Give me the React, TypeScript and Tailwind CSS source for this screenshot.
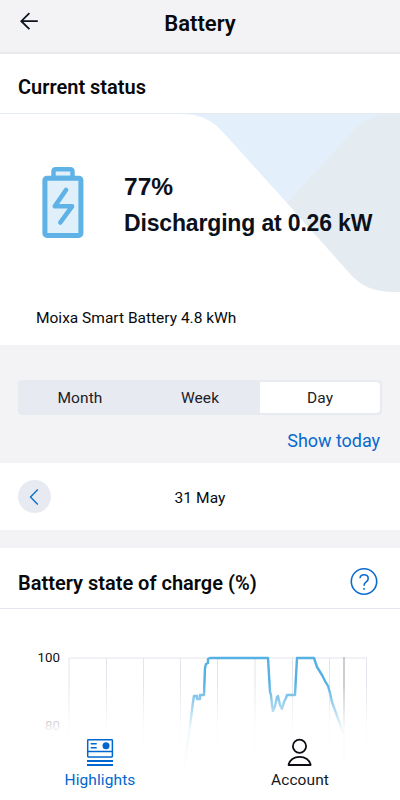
import React from 'react';
import { clsx } from 'clsx';

const BackIcon = () => (
  <svg width="20" height="20" viewBox="0 0 20 20" fill="none" stroke="#0d1420" strokeWidth="1.8">
    <path d="M18.8 10.2H2.3M10.4 2.2L2.3 10.2l8.1 8" />
  </svg>
);

const BatteryIcon = () => (
  <svg width="42" height="72" viewBox="0 0 42 72" fill="#e0f0fb" stroke="#5eb2e6" strokeWidth="5" strokeLinejoin="round">
    <path d="M11.5 11V4.5q0-2.3 2.3-2.3h14.4q2.3 0 2.3 2.3V11z" strokeWidth="4.4" />
    <rect x="2.9" y="11.2" width="36" height="57.2" rx="2" />
    <path d="M24 23L12.8 39.3h17.3L18.3 55.5" fill="none" strokeLinecap="round" strokeWidth="4.6" />
  </svg>
);

const HighlightsIcon = () => (
  <svg width="28" height="30" viewBox="0 0 28 30" fill="none" stroke="#0067cf" strokeWidth="1.5">
    <rect x="1.7" y="2.7" width="24.7" height="17.2" rx=".7" />
    <path d="M1.7 14.4h24.7M4.7 6.7h6M4.7 10.7h6" />
    <path d="M1 24h26M1 28h26" strokeWidth="1.8" />
    <circle cx="20" cy="8.7" r="3.5" fill="#0067cf" stroke="none" />
  </svg>
);

const AccountIcon = () => (
  <svg width="28" height="30" viewBox="0 0 28 30" fill="none" stroke="#0d0d14" strokeWidth="1.8" strokeLinejoin="round">
    <circle cx="13.5" cy="9.3" r="6.6" />
    <path d="M2.6 28c.8-5.2 5.5-8.2 11-8.2s10.2 3 11 8.2z" />
  </svg>
);

const HelpIcon = () => (
  <svg width="28" height="28" viewBox="0 0 28 28" fill="none" stroke="#0b6bd0" strokeWidth="1.6">
    <circle cx="14" cy="13.5" r="12.7" />
    <path d="M10 10.3c.2-2.2 1.8-3.6 4.1-3.6 2.4 0 4.1 1.5 4.1 3.7 0 1.7-.9 2.6-2.1 3.5-1.4 1-2.1 1.8-2.1 3.8" />
    <path d="M14 20v1.7" />
  </svg>
);

// Step values of the charge curve, in plot pixels
const chargeLine =
  '184,768 188,741 191,718 193,702 194,696 197,696 197,699 200,699 200,695 204,695 205,668 206,664 208,663 208,659 210,658 268,658 269,675 270,692 271,695 272,705 273,711 275,706 277,697 278,696 280,705 282,709 284,702 286,698 287,695 295,695 296,676 297,658 314,658 317,667 322,675 325,681 328,686 330,693 332,702 336,713 340,724 343,733';

const gridX = [69, 106.5, 143.5, 180.5, 217.5, 255, 292.5, 329.5, 366.5];

const ChargeChart = () => (
  <svg className="block" width="400" height="191" viewBox="0 609 400 191" fill="none">
    <g stroke="#e3e4ec">
      {gridX.map((x) => (
        <path key={x} d={`M${x} 658V800`} />
      ))}
      <path d="M69 658H367" />
    </g>
    <path d="M344 657V800" stroke="#b0b2b6" strokeWidth="1.3" />
    <polyline points={chargeLine} stroke="#55b0e3" strokeWidth="2.4" strokeLinejoin="round" />
    <g fill="#111" fontFamily="Roboto, sans-serif" fontSize="13.3" textAnchor="end">
      <text x="60" y="662">100</text>
      <text x="60" y="730">80</text>
    </g>
  </svg>
);

const periods = ['Month', 'Week', 'Day'];

const navItems = [
  { name: 'Highlights', icon: HighlightsIcon, active: true },
  { name: 'Account', icon: AccountIcon, active: false },
];

export default function App() {
  const selected = 'Day';

  return (
    <div className="relative flex h-[800px] w-[400px] flex-col overflow-hidden bg-[#f3f3f6] font-['Roboto',sans-serif] text-[#08090c]">
      <header className="grid h-[54px] shrink-0 grid-cols-[60px_1fr_60px] items-center border-b-2 border-[#e9e9ed] pb-1.5">
        <button className="mb-1 ml-[19px]" aria-label="Back">
          <BackIcon />
        </button>
        <h1 className="pt-px text-center text-[22px] font-semibold leading-6">Battery</h1>
      </header>

      <section className="h-[291px] shrink-0 bg-white">
        <div className="flex h-[60px] items-center border-b border-[#e5eaf1] px-[18px] pt-[7px]">
          <h2 className="text-[20px] font-semibold">Current status</h2>
        </div>
        <div className="relative h-[231px]">
          <svg className="absolute right-0 top-0" width="220" height="180" viewBox="180 114 220 180">
            <path d="M180 114c18 0 29 4 41 16l66 73 113-40v-49z" fill="#e3effa" />
            <path d="M287 203l66-72c13-13 24-17 39-17h8v178h-8c-16 0-29-5-40-16z" fill="#e4ecf2" />
          </svg>
          <div className="relative flex pl-[42px] pt-[53px]">
            <BatteryIcon />
            <div className="ml-[40px] mt-px font-['Liberation_Sans',sans-serif] font-bold leading-[37px] text-[#0b101b]">
              <p className="text-[24.5px]">77%</p>
              <p className="whitespace-nowrap text-[23px] tracking-[-.16px]">Discharging at 0.26 kW</p>
            </div>
          </div>
          <p className="relative mt-[66px] pl-9 text-[15.5px] leading-5">Moixa Smart Battery 4.8 kWh</p>
        </div>
      </section>

      <section className="flex h-[118px] shrink-0 flex-col px-[18px] pt-[35px]">
        <div className="grid h-[35px] grid-cols-3 rounded bg-[#e8eaf2] p-0.5">
          {periods.map((period) => (
            <button
              key={period}
              className={clsx('pt-[3px] text-[15.5px] tracking-[.1px] text-[#202126]', period === selected && 'rounded-r bg-white')}
            >
              {period}
            </button>
          ))}
        </div>
        <a className="mt-3 self-end pr-0.5 text-[18px] leading-7 tracking-[-.05px] text-[#0869cc]">Show today</a>
      </section>

      <section className="grid h-[67px] shrink-0 grid-cols-[60px_1fr_60px] items-center bg-white">
        <button className="ml-[18px] flex size-[33px] items-center justify-center rounded-full bg-[#e8eaf2]" aria-label="Previous day">
          <svg width="12" height="18" viewBox="0 0 12 18" fill="none" stroke="#0b72cc" strokeWidth="1.4">
            <path d="M8.8 1.5L1.5 9l7.3 7.5" />
          </svg>
        </button>
        <p className="pt-1 text-center text-[15.5px] tracking-[.1px]">31 May</p>
      </section>

      <section className="mt-[18px] h-[252px] shrink-0 bg-white">
        <div className="flex h-[61px] items-center justify-between border-b border-[#e4e6ee] pl-[18px] pr-[22px] pt-2">
          <h2 className="pt-0.5 text-[20px] font-semibold">Battery state of charge (%)</h2>
          <HelpIcon />
        </div>
        <ChargeChart />
      </section>

      <nav className="absolute inset-x-0 bottom-0 grid h-[130px] grid-cols-2 bg-linear-to-b from-white/0 from-10% via-white/92 via-45% to-white to-80% pt-[67px]">
        {navItems.map((item) => (
          <a
            key={item.name}
            className={clsx(
              'flex flex-col items-center text-[15.5px] leading-5 tracking-[.1px]',
              item.active ? 'text-[#0067cf]' : 'text-[#16171c]'
            )}
          >
            <item.icon />
            <span className="mt-[3px]">{item.name}</span>
          </a>
        ))}
      </nav>
    </div>
  );
}
